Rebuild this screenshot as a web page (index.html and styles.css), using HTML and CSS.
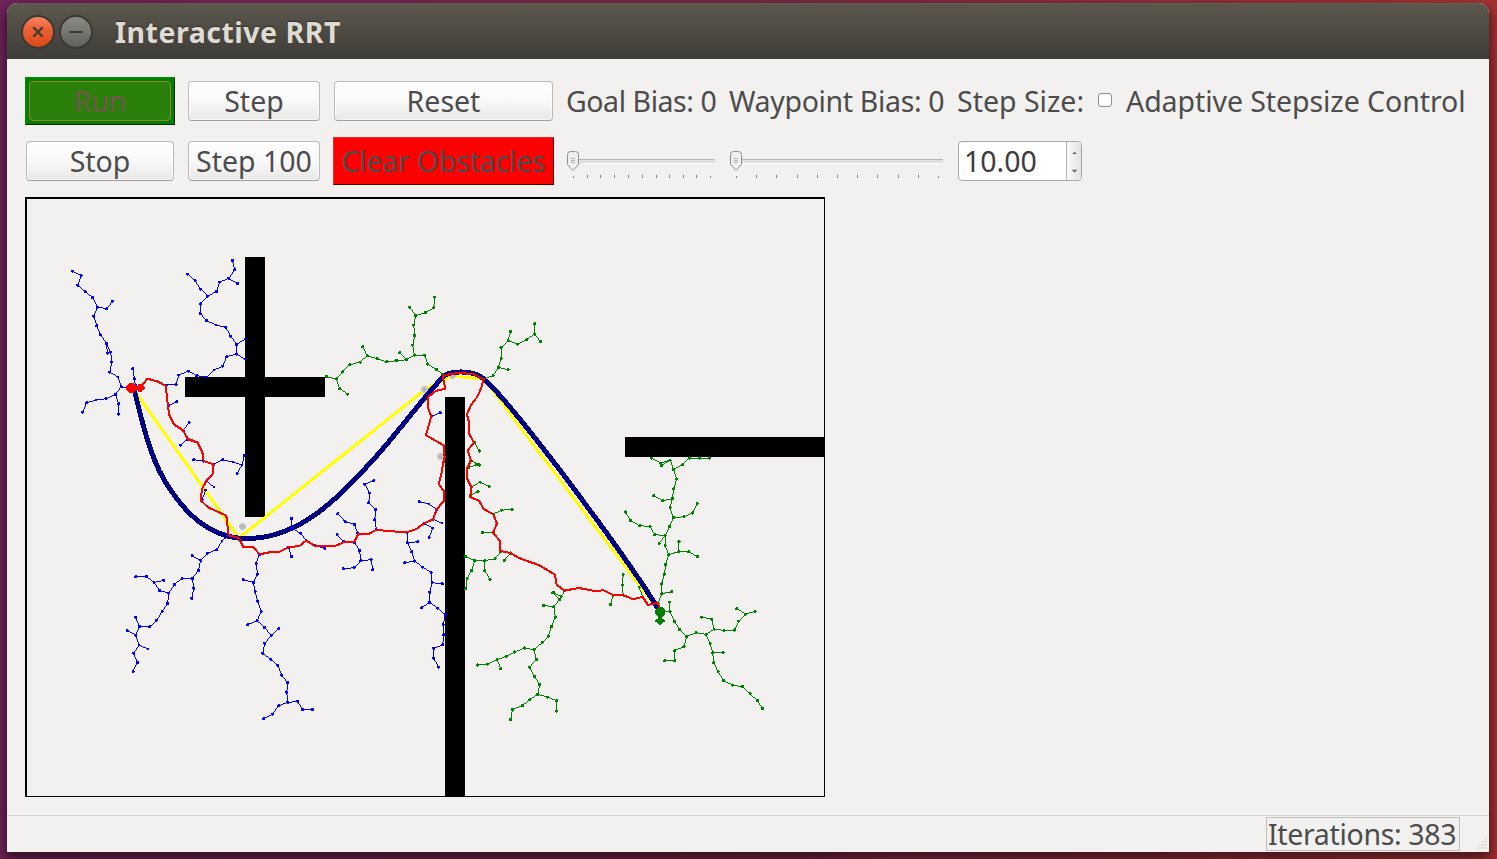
FILE: index.html
```html
<!DOCTYPE html>
<html lang="en">
<head>
<meta charset="utf-8">
<title>Interactive RRT</title>
<link rel="stylesheet" href="styles.css">
</head>
<body>
<main class="window">
  <header class="titlebar">
    <span class="winbtn close"><svg viewBox="0 0 32 32"><path d="M11 11l10 10M21 11l-10 10"/></svg></span>
    <span class="winbtn minimize"><svg viewBox="0 0 32 32"><path d="M9 16h14"/></svg></span>
    <h1 class="title">Interactive RRT</h1>
  </header>
  <section class="content">
    <div class="controls">
      <button class="btn flat run"><span class="t-run">Run</span></button>
      <button class="btn"><span class="t-step">Step</span></button>
      <button class="btn"><span class="t-reset">Reset</span></button>
      <span class="label t-goal">Goal Bias: 0</span>
      <span class="label t-way">Waypoint Bias: 0</span>
      <span class="label t-size">Step Size:</span>
      <label class="label check"><span class="box"></span><span class="t-adapt">Adaptive Stepsize Control</span></label>
      <button class="btn"><span class="t-stop">Stop</span></button>
      <button class="btn"><span class="t-step100">Step 100</span></button>
      <button class="btn flat clear"><span class="t-clear">Clear Obstacles</span></button>
      <svg class="slider" width="150" height="48" viewBox="566 137 150 48">
        <path class="groove" d="M574 159.5H714.5"/><path class="groove-in" d="M574 161.5H715"/><path class="groove-lo" d="M574 163.5H714"/>
        <path class="ticks" d="M573.5 176v2M587.5 175v3M600.5 175v3M614.5 175v3M628.5 175v3M642.5 175v3M656.5 175v3M669.5 175v3M683.5 175v3M696.5 175v3M710.5 176v2"/>
        <path class="knob" d="M567.5 154.5q0-3 3-3h5q3 0 3 3v10l-5.5 6-5.5-6z"/><path class="grip" d="M571 158.5h4M571 160.5h4M571 162.5h4"/>
      </svg>
      <svg class="slider" width="216" height="48" viewBox="728 137 216 48">
        <path class="groove" d="M737 159.5H942.5"/><path class="groove-in" d="M737 161.5H943"/><path class="groove-lo" d="M737 163.5H942"/>
        <path class="ticks" d="M736.5 176v2M756.5 175v3M776.5 175v3M797.5 175v3M817.5 175v3M837.5 175v3M857.5 175v3M877.5 175v3M898.5 175v3M918.5 175v3M938.5 176v2"/>
        <path class="knob" d="M730.5 154.5q0-3 3-3h5q3 0 3 3v10l-5.5 6-5.5-6z"/><path class="grip" d="M734 158.5h4M734 160.5h4M734 162.5h4"/>
      </svg>
      <div class="spin"><span class="value t-value">10.00</span><svg class="arrows" width="15" height="38" viewBox="0 0 15 38"><path d="M5.5 11.5l2.5-2.500 2.500 2.500zM5 28.500h6l-3 3z"/></svg></div>
    </div>
    <svg class="canvas" width="800" height="600" viewBox="25 197 800 600">
      <defs>
        <marker id="b" markerUnits="userSpaceOnUse" markerWidth="12" markerHeight="12" refX="6" refY="6" viewBox="0 0 12 12"><circle cx="6" cy="6" r="4.600" fill="#00f"/></marker>
        <marker id="g" markerUnits="userSpaceOnUse" markerWidth="12" markerHeight="12" refX="6" refY="6" viewBox="0 0 12 12"><circle cx="6" cy="6" r="4.800" fill="#008000"/></marker>
      </defs>
      <path d="M245 257h20v260h-20zM185 377h140v20H185zM445 397h20v400h-20zM625 437h200v20H625z"/>
      <path class="shortcut" d="M134 390L239 538L427 388L452 376L484 379L655 606"/>
      <g class="waypoint"><circle cx="242.500" cy="526.500" r="2.300"/><circle cx="424.500" cy="389.500" r="2.300"/><circle cx="452.500" cy="375.500" r="2.300"/><circle cx="440.500" cy="456.500" r="2.300"/></g>
      <path class="smooth" d="M134 389C142 420 150 461 170 489C187 515 212 538.500 247 538.500C300 538.500 338 498 373 460C400 430 422 399 443 377C450 370 474 370 484 379C508 401 540 445 560 470C590 511 625 555 659 610"/>

      <g class="tree start" transform="translate(60 250) scale(.33333)">
        <path d="M212 413L183 409L173 380L148 365L154 335L151 305L138 279L120 253L109 226L100 198L111 170L97 142L74 124L52 105L62 76L37 62"/>
        <path d="M111 170L139 175L157 152M138 279L141 308M183 409L165 432L137 445L107 449L79 457L67 485M165 432L175 460V491M217 355L222 385L225 405"/>
        <path d="M318 404L347 402L355 374L385 362L409 376L440 380L461 359L487 347L499 319L528 311V282L511 257L496 231L467 224L439 211L420 190L421 160L442 137L468 123L478 95L505 84L523 58L516 30"/>
        <path d="M505 84L532 100M442 137L421 116L404 91L382 71M528 311L554 326M528 282L554 266M325 466L349 454M368 540L386 517M381 567L360 584"/>
      </g>
      <g class="tree start" transform="translate(110 420) scale(.33333)">
        <path d="M250 118L280 122M310 132L337 118L368 125L395 134L401 105M395 134L380 159M288 182L311 200M275 238L286 209M543 294V323L570 338L588 361M535 380L543 408M614 376L643 384"/>
        <path d="M355 345L335 362L319 388L292 398L271 420L264 450L246 474H215L192 492L175 518L172 549L155 574L139 599L118 619L87 618L76 644L86 674L70 699L81 726L68 753"/>
        <path d="M87 618L75 590M76 644L50 630M86 674L113 686M271 420L245 406M246 474L250 504L244 534M175 518L148 511L131 486L108 468L76 469M131 486L160 480"/>
        <path d="M447 402L437 430L442 461L429 486L434 514L442 543L452 574L440 601L463 622L482 645L463 669L457 699L480 716L502 735L514 764L532 787L529 816L532 846L562 843L577 868L606 867"/>
        <path d="M532 846L505 856L487 881L460 895M429 486L399 478M440 601L412 613M482 645L505 625"/>
      </g>
      <g class="tree start" transform="translate(250 460) scale(.33333)">
        <path d="M260 223L280 244M262 160L284 184L312 192L322 218M378 208L373 178L376 148L355 127L358 98L343 71L370 61M312 246L328 271L331 301L362 298L367 328M331 301L311 322L279 325"/>
        <path d="M470 216L471 247L484 274L493 302L517 320L542 336L545 367L538 396V426L562 443L585 463L578 493L580 523L577 553L550 564V594L565 620"/>
        <path d="M471 247L502 244M493 302L463 307M545 367L576 370M538 426L514 442M506 124L536 131L559 147M548 177L575 188M522 189L547 203L536 232"/>
        <path d="M545 -133L570 -143"/>
      </g>
      <g class="tree goal" transform="translate(310 280) scale(.33333)">
        <path d="M397 281L379 268L352 251L343 224H312L307 194L313 165L310 134L316 106L346 96L370 82L373 50M316 106L298 80"/>
        <path d="M312 224L288 238L258 241L229 244L200 235L170 226L149 245L118 253L97 274L78 296L48 289M170 226L157 199M288 238L268 217M78 296L88 325L112 341"/>
        <path d="M520 296L548 286L564 261L572 233V201L593 181L622 191L649 178L672 161L673 130M672 161L691 184M593 181L601 153M564 261L593 268"/>
      </g>
      <g class="tree goal" transform="translate(440 430) scale(.33333)">
        <path d="M102 37L117 62M92 90L116 104M85 112L108 102L116 103M93 170L119 155L146 169M90 195L113 183M158 251L184 239L215 238M158 307L127 306"/>
        <path d="M180 364L164 385L133 391L103 390L75 379M103 390L94 420L80 445L76 475M133 391V421L149 447M210 368L191 391"/>
        <path d="M373 481L358 507L340 529L345 560L333 588L324 617L305 637L281 658L252 653L222 665L197 678L170 688L142 701L111 704M170 688L181 715"/>
        <path d="M281 658L288 687L268 710L282 738L298 763L292 792L268 808L246 826L216 837L211 867M292 792L322 800L349 811V842M358 507L337 487M362 499L340 487M340 529L309 525M518 494L510 523M548 494L547 464L548 433"/>
      </g>
      <g class="tree goal" transform="translate(590 430) scale(.33333)">
        <path d="M203 520L214 490V460L222 431L226 402L235 373L224 346V315L193 313L179 288L148 286L121 271L105 245M224 315L206 340"/>
        <path d="M224 315L237 289L249 262L239 232L246 205L250 175L259 146L250 117L239 89L211 98L184 83M239 89L214 105L211 98M250 117L277 103L297 83H327H357"/>
        <path d="M246 205L217 211L190 196M249 262L281 259L306 248L320 220M235 373L265 364H295L321 379M265 364L266 333M214 490L244 484"/>
        <path d="M209 544H239L253 573L268 598L289 618L317 607L347 612L371 596L401 600L432 599L445 572L466 551L494 543M466 551L439 535M371 596L364 566L334 560M239 544L238 515"/>
        <path d="M289 618L281 648L253 661V691H223M347 612L359 640L367 667L370 697L383 724L400 751L427 764L456 769L479 790L501 811L516 835M367 667L398 666M157 500L146 470"/>
      </g>

      <g class="route">
        <path transform="translate(60.3 250.300) scale(.33333)" d="M240 413L261 385L291 393L316 407L323 466L327 495L341 522L368 540L383 567L412 577L425 605"/>
        <path transform="translate(110.300 420.300) scale(.33333)" d="M233 55L262 67L276 95L280 122L310 132L307 161L288 182L275 206L271 240L293 261L348 286L355 345L386 353L398 379L430 381L447 402"/>
        <path transform="translate(250.300 460.300) scale(.33333)" d="M28 282L58 276L88 274L115 261L147 257L168 241L194 257H254L280 246H312L324 220L354 222L378 208L410 212L470 216L498 206L522 189L548 177L559 147L580 123L582 94L565 71L573 43L580 0"/>
        <path transform="translate(310.300 280.300) scale(.33333)" d="M397 560L403 530L400 495L347 465L363 408L352 380L354 350L376 332L405 325L397 288L420 281L450 278L490 282L520 297L512 325L500 351L482 374L470 402L477 430V462L491 487"/>
        <path transform="translate(440.300 430.300) scale(.33333)" d="M102 37L82 60L92 90L79 118L80 145L93 170L90 201L116 211L131 237L158 251L170 280L158 307L178 331L180 362L210 368L236 383L266 394L295 404L344 433L349 463L373 481L415 473L463 482L490 480L518 494H548L578 507"/>
        <path transform="translate(590.300 430.300) scale(.33333)" d="M128 507L157 500L173 524L203 518L208 538"/>
      </g>
      <path class="pose-start" d="M129 383h4l3 3v1h1v-1h1v-2h4v2h2v1h1v2h-1v1h-2v2h-4v-2h-2l-3 3h-4l-3-3v-4z"/>
      <path class="pose-goal" d="M658 607h4l3 3v4l-3 3v2h2v1h1v2h-2v1h-1v1h-1v1h-2v-1h-1v-1h-1v-1h-2v-2h1v-1h2v-2l-3-3v-4z"/>
      <path d="M25 197h800v600H25zM27 199v597h797V199z" fill-rule="evenodd"/>
    </svg>
  </section>
  <footer class="statusbar">
    <span class="status"><span class="t-iter">Iterations: 383</span></span>
    <svg class="resize" width="12" height="12" viewBox="0 0 12 12"><path d="M9 1h1.500M6 4h1.500M9 4h1.500M3 7h1.500M6 7h1.500M9 7h1.500M0 10h1.500M3 10h1.500M6 10h1.500M9 10h1.500"/></svg>
  </footer>
</main>
</body>
</html>
```
FILE: styles.css
```css
* { box-sizing: border-box; }
body {
  margin: 0;
  width: 1497px;
  height: 859px;
  overflow: hidden;
  padding: 3px 8px 7px 7px;
  font: 28.5px/48px "Noto Sans", "Open Sans", sans-serif;
  color: #4c4c4c;
  background: linear-gradient(90deg, #70235a 0%, #7a2747 50%, #a43232 100%);
}
.window {
  height: 849px;
  display: flex;
  flex-direction: column;
  background: #f2f1ef;
  border-radius: 10px 10px 0 0;
  box-shadow: 0 6px 12px 2px rgba(0, 0, 0, .55);
}
.titlebar {
  height: 56px;
  flex: none;
  display: flex;
  align-items: center;
  padding: 1px 14px;
  border-radius: 10px 10px 0 0;
  border-top: 1px solid #625e50;
  background: linear-gradient(#5c584d, #3d3c37);
}
.winbtn {
  width: 34px;
  height: 34px;
  margin-right: 4px;
  border: 2px solid #3b3933;
  border-radius: 50%;
}
.winbtn svg { display: block; width: 30px; height: 30px; fill: none; stroke: #3b3933; stroke-width: 2.2; }
.close { background: linear-gradient(#f48462, #ea6237 40%, #dd4814); }
.minimize { background: linear-gradient(#8c8b85, #605f59); }
.title {
  margin: 0 0 0 18px;
  font-size: 28.5px;
  font-weight: 700;
  letter-spacing: .5px;
  line-height: 50px;
  color: #dfdbd2;
  text-shadow: 0 -1px 1px #33312c;
  white-space: nowrap;
}
.content { flex: 1; padding: 18px; }
.controls {
  display: grid;
  grid-template-columns: 150px 134px 221px 150px 217px 126px 375px;
  grid-template-rows: 48px 48px;
  column-gap: 12px;
  row-gap: 12px;
  margin-bottom: 12px;
}
.btn {
  margin: 4px 1px;
  padding: 0;
  font: inherit;
  line-height: 38px;
  color: #4c4c4c;
  white-space: nowrap;
  border: 1px solid #bdbbb8;
  border-bottom-color: #a09e9b;
  border-radius: 4px;
  background: linear-gradient(#fefefe, #f9f9f9 50%, #e9e8e7);
  box-shadow: inset 0 0 0 1px rgba(255, 255, 255, .6);
}
.flat { margin: 0; border-radius: 0; box-shadow: none; }
.run {
  padding: 3px;
  color: #70574a;
  border: 1px solid #009000;
  border-right: 1px solid #003000;
  border-bottom: 1px solid #003000;
  background: #008000;
}
.run span { display: block; height: 40px; border: 1px solid #99802e; border-radius: 4px; background: #2b7f0b; }
.clear { background: #f00; border: 1px solid #f22; border-right: 1px solid #500; border-bottom: 1px solid #500; }
.label { white-space: nowrap; }
.t-goal { letter-spacing: -.44px; }
.t-way { letter-spacing: -.34px; padding-left: 1px; }
.t-adapt { letter-spacing: -.07px; }
.t-clear { letter-spacing: -.2px; }
.t-iter { letter-spacing: -.34px; }
.check { display: flex; }
.box {
  width: 14px;
  height: 14px;
  margin: 16px 14px 0 3px;
  flex: none;
  border: 1px solid #92908c;
  border-radius: 3px;
  background: #fff;
}
.slider { display: block; fill: none; }
.groove { stroke: #b5b3b0; }
.groove-in { stroke: #e0dfdc; stroke-width: 3; }
.groove-lo { stroke: #fff; }
.ticks { stroke: #858380; }
.knob { fill: #f0efed; stroke: #92908d; }
.grip { stroke: #b5b3b0; }
.spin {
  display: flex;
  height: 40px;
  width: 124px;
  margin: 4px 0 0 1px;
  border: 1px solid #a9a7a4;
  border-radius: 4px;
  background: #fff;
  overflow: hidden;
}
.value { width: 107px; padding-left: 5px; line-height: 38px; color: #3c3c3c; }
.arrows { border-left: 1px solid #b5b3b0; background: linear-gradient(90deg, #fafafa, #e4e3e1); fill: #666; }
.canvas { display: block; shape-rendering: crispEdges; }
.shortcut { fill: none; stroke: #ff0; stroke-width: 3; }
.smooth { fill: none; stroke: #000080; stroke-width: 5; }
.waypoint { fill: #b0b0b0; stroke: #c0c0c0; stroke-width: 2; }
.tree > path { fill: none; stroke-width: 3; transform: translate(1.2px, 1.2px); }
.start > path { stroke: #00f; marker: url(#b); }
.goal > path { stroke: #008000; marker: url(#g); }
.route path { fill: none; stroke: #f00; stroke-width: 6; }
.pose-start { fill: #f00; }
.pose-goal { fill: #008000; }
.statusbar {
  flex: none;
  height: 37px;
  display: flex;
  justify-content: flex-end;
  align-items: flex-start;
  border-top: 1px solid #d5d4d2;
  padding: 1px 1px 0 0;
}
.status { width: 194px; height: 34px; border: 1px solid #bfbebb; line-height: 33px; padding-left: 1px; white-space: nowrap; }
.resize { margin: 21px 0 0 16px; stroke: #bbb9b6; }
```
